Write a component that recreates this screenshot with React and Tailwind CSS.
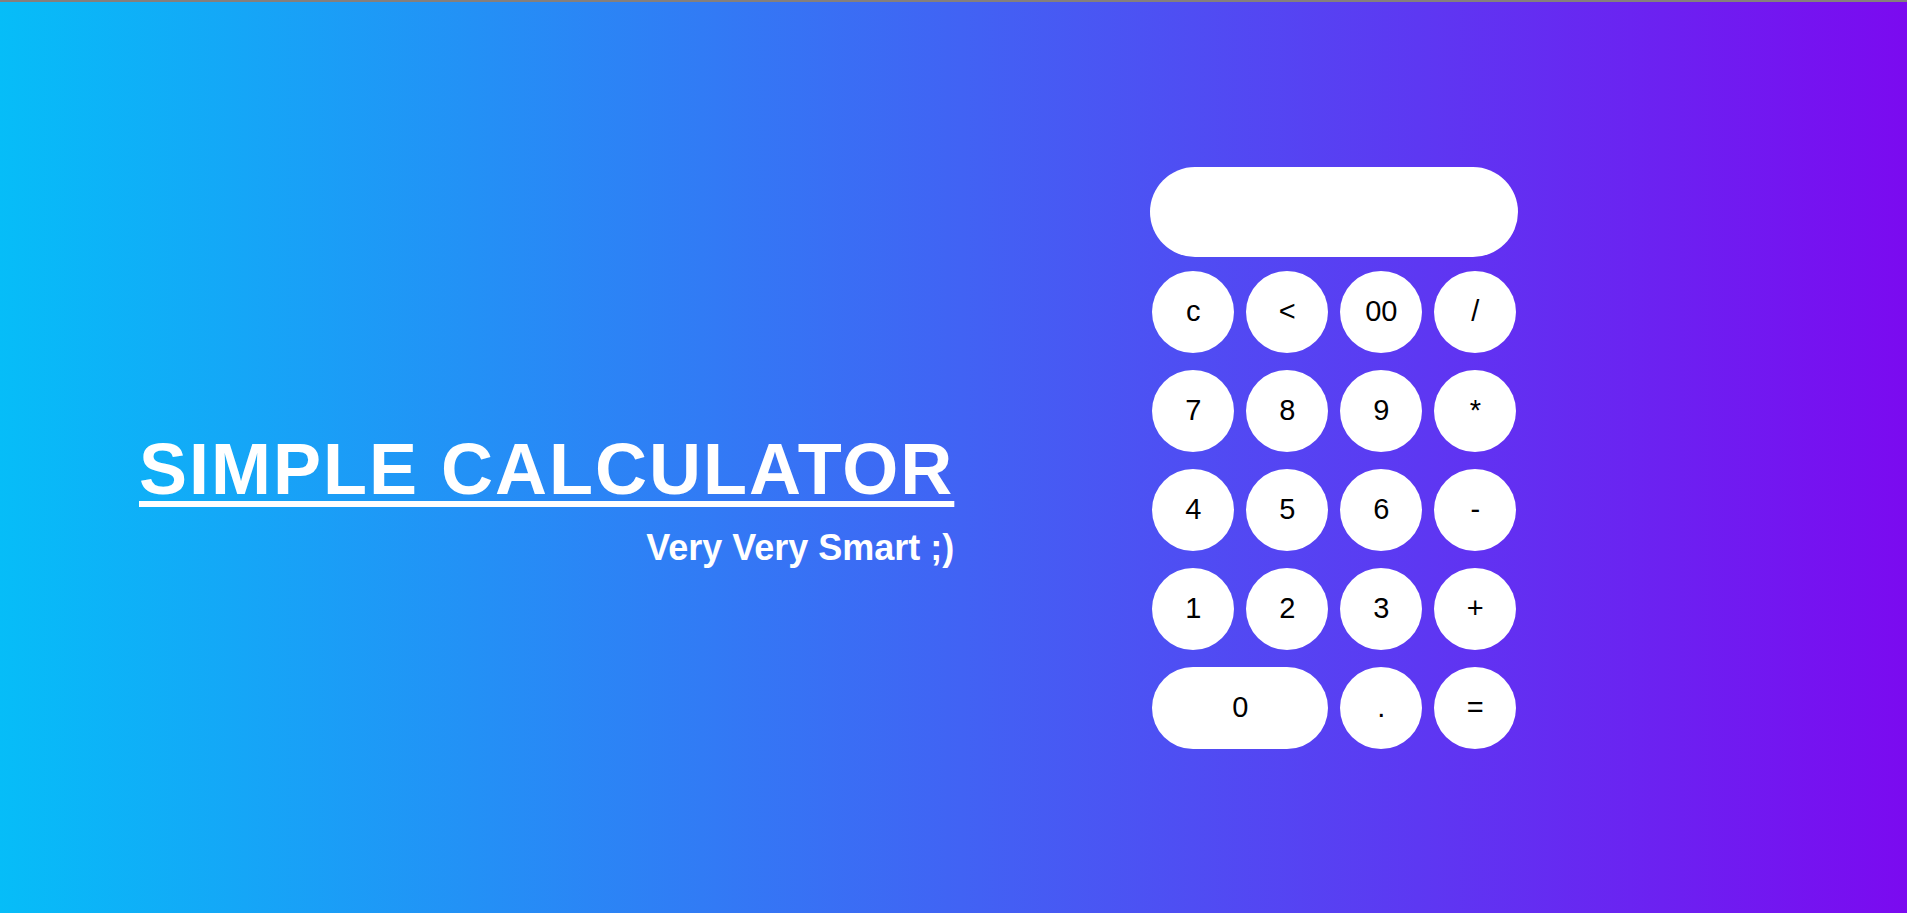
import { useState } from "react";

const keys = [
  ["c", "<", "00", "/"],
  ["7", "8", "9", "*"],
  ["4", "5", "6", "-"],
  ["1", "2", "3", "+"],
];

const App = () => {
  const [display, setDisplay] = useState("");

  const press = (key) => {
    if (key === "c") return setDisplay("");
    if (key === "<") return setDisplay((d) => d.slice(0, -1));
    if (key === "=") {
      try {
        // eslint-disable-next-line no-new-func
        setDisplay(String(Function(`return (${display})`)()));
      } catch {
        setDisplay("Error");
      }
      return;
    }
    setDisplay((d) => d + key);
  };

  const btn =
    "h-[82px] rounded-full bg-white text-black text-[29px] flex items-center justify-center cursor-pointer";

  return (
    <div
      className="h-[913px] border-t-2 border-[#857f7c] bg-[linear-gradient(to_right,#06bdf8,#7b0af0)] flex items-center overflow-hidden"
      style={{ fontFamily: '"Liberation Sans", Arial, sans-serif' }}
    >
      <div className="ml-[139px] mt-[80px] flex flex-col items-end text-white font-bold">
        <h1 className="text-[72px] leading-[83px] tracking-[2px] underline decoration-[6px] underline-offset-[7px]">
          SIMPLE CALCULATOR
        </h1>
        <p className="text-[36px] leading-[41px] mt-[16px]">
          Very Very Smart ;)
        </p>
      </div>

      <div className="ml-[196px] w-[368px] flex flex-col items-center">
        <input
          type="text"
          value={display}
          readOnly
          className="w-[368px] h-[90px] rounded-full bg-white text-black text-[36px] text-right px-10 outline-none"
        />
        <div className="mt-[14px] grid grid-cols-[repeat(4,82px)] gap-x-[12px] gap-y-[17px]">
          {keys.flat().map((k) => (
            <button key={k} onClick={() => press(k)} className={btn}>
              {k}
            </button>
          ))}
          <button onClick={() => press("0")} className={`${btn} col-span-2`}>
            0
          </button>
          <button onClick={() => press(".")} className={btn}>
            .
          </button>
          <button onClick={() => press("=")} className={btn}>
            =
          </button>
        </div>
      </div>
    </div>
  );
};

export default App;
